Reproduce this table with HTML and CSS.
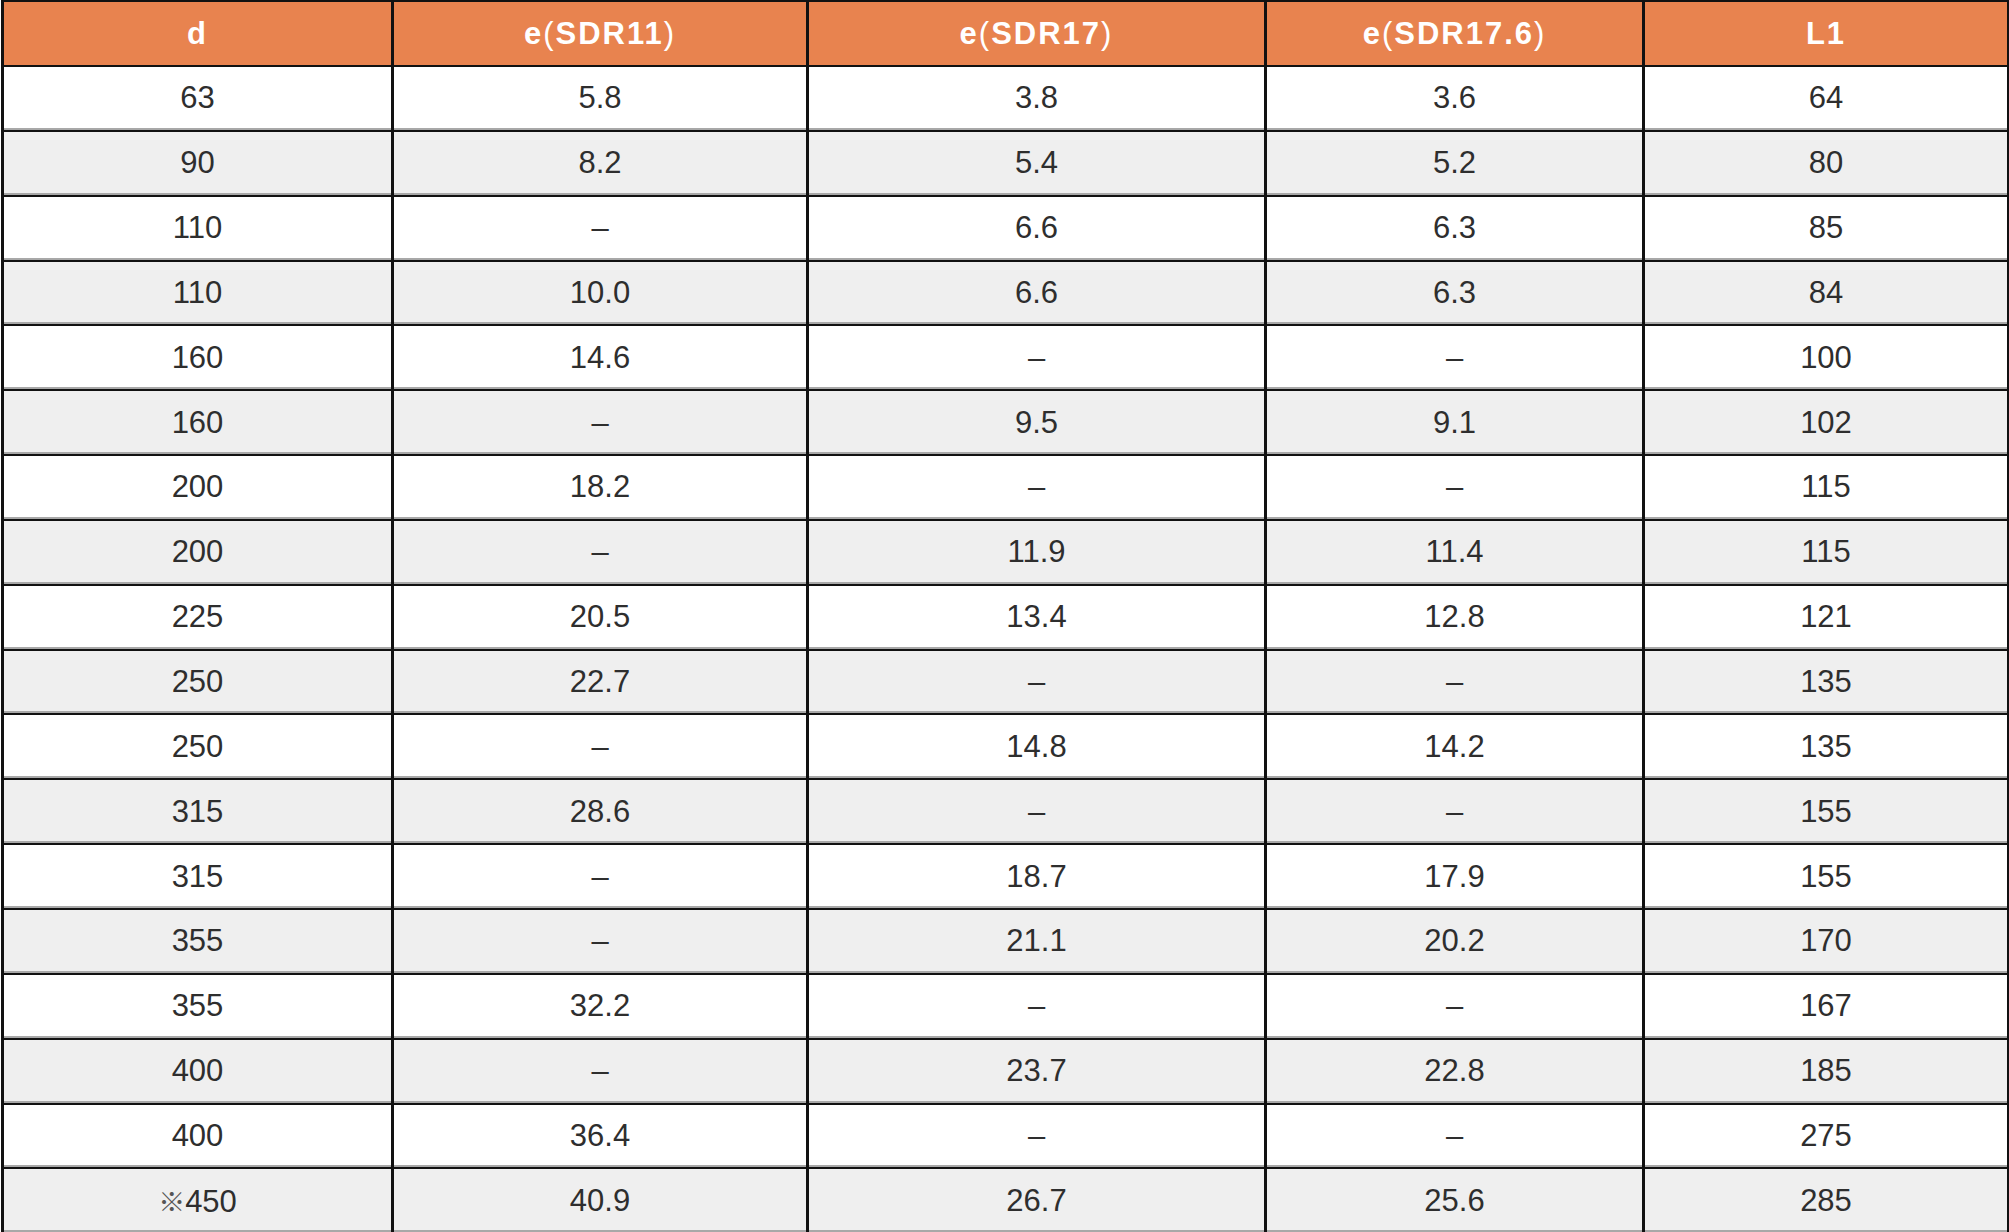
FILE: index.html
```html
<!DOCTYPE html>
<html lang="ja">
<head>
<meta charset="utf-8">
<title>寸法表</title>
<link rel="stylesheet" href="styles.css">
</head>
<body>
<table class="spec">
  <colgroup>
    <col class="c1"><col class="c2"><col class="c3"><col class="c4"><col class="c5">
  </colgroup>
  <thead>
    <tr>
      <th>d</th>
      <th>e<span class="p">(</span>SDR11<span class="p">)</span></th>
      <th>e<span class="p">(</span>SDR17<span class="p">)</span></th>
      <th>e<span class="p">(</span>SDR17.6<span class="p">)</span></th>
      <th>L1</th>
    </tr>
  </thead>
  <tbody>
    <tr><td>63</td><td>5.8</td><td>3.8</td><td>3.6</td><td>64</td></tr>
    <tr><td>90</td><td>8.2</td><td>5.4</td><td>5.2</td><td>80</td></tr>
    <tr><td>110</td><td>–</td><td>6.6</td><td>6.3</td><td>85</td></tr>
    <tr><td>110</td><td>10.0</td><td>6.6</td><td>6.3</td><td>84</td></tr>
    <tr><td>160</td><td>14.6</td><td>–</td><td>–</td><td>100</td></tr>
    <tr><td>160</td><td>–</td><td>9.5</td><td>9.1</td><td>102</td></tr>
    <tr><td>200</td><td>18.2</td><td>–</td><td>–</td><td>115</td></tr>
    <tr><td>200</td><td>–</td><td>11.9</td><td>11.4</td><td>115</td></tr>
    <tr><td>225</td><td>20.5</td><td>13.4</td><td>12.8</td><td>121</td></tr>
    <tr><td>250</td><td>22.7</td><td>–</td><td>–</td><td>135</td></tr>
    <tr><td>250</td><td>–</td><td>14.8</td><td>14.2</td><td>135</td></tr>
    <tr><td>315</td><td>28.6</td><td>–</td><td>–</td><td>155</td></tr>
    <tr><td>315</td><td>–</td><td>18.7</td><td>17.9</td><td>155</td></tr>
    <tr><td>355</td><td>–</td><td>21.1</td><td>20.2</td><td>170</td></tr>
    <tr><td>355</td><td>32.2</td><td>–</td><td>–</td><td>167</td></tr>
    <tr><td>400</td><td>–</td><td>23.7</td><td>22.8</td><td>185</td></tr>
    <tr><td>400</td><td>36.4</td><td>–</td><td>–</td><td>275</td></tr>
    <tr><td><span class="mark">※</span>450</td><td>40.9</td><td>26.7</td><td>25.6</td><td>285</td></tr>
  </tbody>
</table>
</body>
</html>
```

FILE: styles.css
```css
html, body {
  margin: 0;
  padding: 0;
  background: #ffffff;
}

.spec {
  width: 2006px;
  margin-left: 1px;
  border-collapse: collapse;
  table-layout: fixed;
  font-family: "Liberation Sans", Arial, "Noto Sans CJK JP", sans-serif;
  font-size: 31px;
}

.c1 { width: 390px; }
.c2 { width: 415px; }
.c3 { width: 458px; }
.c4 { width: 378px; }
.c5 { width: 365px; }

.spec th,
.spec td {
  text-align: center;
  vertical-align: middle;
  padding: 0;
  border-left: 3px solid #111111;
  border-right: 3px solid #111111;
  border-top: 2px solid #111111;
  border-bottom: 2px solid #111111;
}

.spec th {
  height: 63px;
  background: #e8834f;
  color: #ffffff;
  font-weight: bold;
  font-size: 31px;
  letter-spacing: 2px;
}

.spec th .p {
  font-weight: normal;
}

.spec td {
  height: 62.85px;
  color: #2e2e2e;
  box-shadow: inset 0 -2px 0 #a8a8a8;
}

.spec tbody tr:nth-child(even) td {
  background: #efefef;
}

.mark {
  font-family: "Noto Sans CJK JP", sans-serif;
  color: #555555;
  font-size: 27px;
}
```
